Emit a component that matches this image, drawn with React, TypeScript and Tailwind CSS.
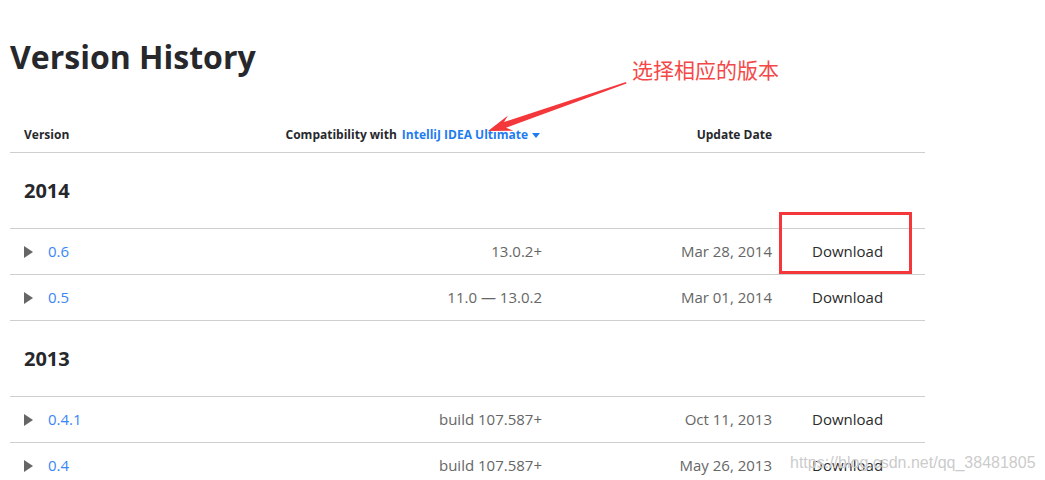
import React from 'react';

type Release = { version: string; compat: string; date: string };

const sections: { year: string; releases: Release[] }[] = [
  {
    year: '2014',
    releases: [
      { version: '0.6', compat: '13.0.2+', date: 'Mar 28, 2014' },
      { version: '0.5', compat: '11.0 — 13.0.2', date: 'Mar 01, 2014' },
    ],
  },
  {
    year: '2013',
    releases: [
      { version: '0.4.1', compat: 'build 107.587+', date: 'Oct 11, 2013' },
      { version: '0.4', compat: 'build 107.587+', date: 'May 26, 2013' },
    ],
  },
];

const grid = 'grid grid-cols-[238px_294px_230px_1fr]';

const ReleaseRow = ({ r }: { r: Release }) => (
  <div className={`${grid} h-[46px] items-center border-b border-[#cfcfcf] text-[15px]`}>
    <div className="flex items-center pl-[14px]">
      <span className="w-0 h-0 border-y-[6.5px] border-y-transparent border-l-[9px] border-l-[#666]" />
      <a className="ml-[15px] text-[#3a86f5]">{r.version}</a>
    </div>
    <div className="text-right text-[#666]">{r.compat}</div>
    <div className="text-right text-[#666]">{r.date}</div>
    <div className="pl-[40px] text-[#2b2b2b]">Download</div>
  </div>
);

const App = () => {
  return (
    <div className="relative w-[1045px] h-[480px] overflow-hidden bg-white font-['Open_Sans',sans-serif]">
      <div className="ml-[10px] w-[915px] pt-[37px]">
        <h1 className="text-[32px] leading-[40px] font-bold text-[#27282c]">Version History</h1>

        {/* table header */}
        <div className={`${grid} h-[76px] items-end pb-[9px] border-b border-[#cfcfcf] text-[12px] leading-[16px] font-bold text-[#27282c]`}>
          <div className="pl-[14px]">Version</div>
          <div className="flex items-center justify-end pr-[2px]">
            Compatibility with
            <span className="ml-[5px] text-[#1e7cf0]">IntelliJ IDEA Ultimate</span>
            <span className="ml-[4px] w-0 h-0 border-x-[4.5px] border-x-transparent border-t-[5px] border-t-[#1e7cf0]" />
          </div>
          <div className="text-right">Update Date</div>
          <div />
        </div>

        {sections.map((s) => (
          <div key={s.year}>
            <div className="h-[76px] pl-[14px] pt-[24px] border-b border-[#cfcfcf] text-[20px] leading-[28px] font-bold text-[#27282c]">
              {s.year}
            </div>
            {s.releases.map((r) => (
              <ReleaseRow key={r.version} r={r} />
            ))}
          </div>
        ))}
      </div>

      {/* screenshot annotations */}
      <div className="absolute left-[779px] top-[212px] w-[133px] h-[62px] border-[3px] border-[#f4373a]" />
      <div className="absolute left-[632px] top-[55px] text-[21px] leading-[28px] text-[#f44848] font-['Noto_Sans_CJK_SC',sans-serif]">
        选择相应的版本
      </div>
      <svg className="absolute left-0 top-0" width="1045" height="480" viewBox="0 0 1045 480">
        <polygon
          points="626,82 504,122 508,115.5 488,131 513.3,130.7 506,127.7 626.5,83.5"
          fill="#f4373a"
        />
      </svg>
      <div className="absolute left-[790px] top-[452px] text-[16px] leading-[22px] text-[#bdbdbd]/80 font-['Liberation_Sans',sans-serif] [text-shadow:0_0_1px_#fff]">
        https://blog.csdn.net/qq_38481805
      </div>
    </div>
  );
};

export default App;
